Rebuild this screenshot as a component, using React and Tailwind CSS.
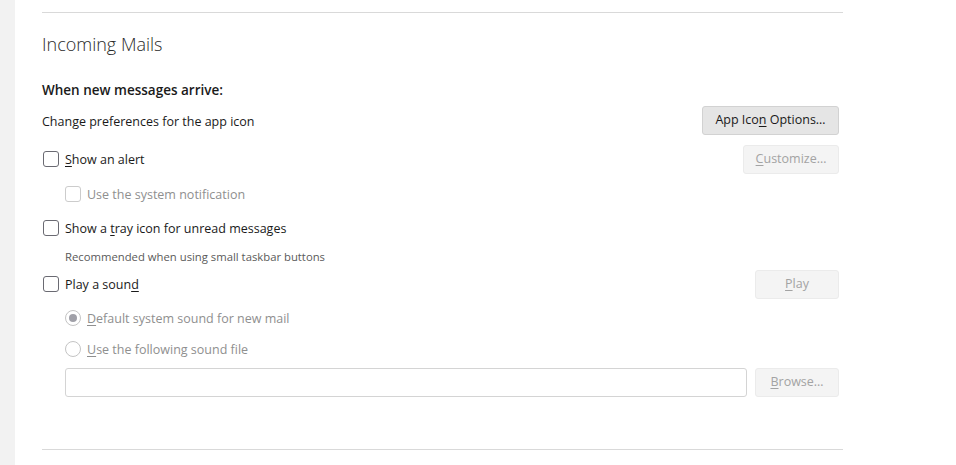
import React from 'react';

const font = { fontFamily: '"Open Sans", "Noto Sans", sans-serif' };

function Key({ children }) {
  return <span className="underline underline-offset-2">{children}</span>;
}

function Checkbox({ disabled }) {
  return (
    <span
      className={`inline-block w-4 h-4 rounded-[3px] border bg-white shrink-0 ${
        disabled ? 'border-[#cccccc]' : 'border-[#6a6a72]'
      }`}
    />
  );
}

function Radio({ checked }) {
  return (
    <span className="flex items-center justify-center w-4 h-4 rounded-full border border-[#c4c4c4] bg-white shrink-0">
      {checked && <span className="w-2 h-2 rounded-full bg-[#a0a0a8]" />}
    </span>
  );
}

function Button({ children, disabled, className = '' }) {
  return (
    <button
      className={`h-[29px] rounded-[3px] border text-[12.5px] ${
        disabled
          ? 'bg-[#f4f4f4] border-[#ebebeb] text-[#a3a3a3]'
          : 'bg-[#e5e5e5] border-[#d2d2d2] text-[#1a1a1a]'
      } ${className}`}
    >
      {children}
    </button>
  );
}

export default function App() {
  return (
    <div className="flex w-[956px] h-[465px] bg-white overflow-hidden text-[#1a1a1a] text-[12.5px]" style={font}>
      <div className="w-[15px] bg-[#f2f2f2] shrink-0" />
      <div className="pl-[27px]">
        <div className="w-[801px]">
          <div className="mt-3 h-px bg-[#d9d9d9]" />
          <div className="h-[62px] flex items-center text-[18px] font-light text-[#2a2a2a]">Incoming Mails</div>
          <div className="h-7 flex items-center pt-[2px] text-[13.5px] font-semibold">When new messages arrive:</div>

          <div className="pr-[4px]">
            <div className="mt-[3px] h-[29px] flex items-center justify-between">
              <span className="pt-[3px]">Change preferences for the app icon</span>
              <Button className="w-[137px]">
                App Ico<Key>n</Key> Options…
              </Button>
            </div>

            <div className="mt-[10px] h-7 flex items-center justify-between">
              <label className="flex items-center gap-[6px] pl-px">
                <Checkbox />
                <span className="pt-[2px]">
                  <Key>S</Key>how an alert
                </span>
              </label>
              <Button disabled className="w-[96px] h-[28px]">
                <Key>C</Key>ustomize…
              </Button>
            </div>

            <div className="mt-[7px] h-7 flex items-center pl-[23px] gap-[6px] text-[#8f8f8f]">
              <Checkbox disabled />
              <span className="pt-[2px]">Use the system notification</span>
            </div>

            <div className="mt-[6px] h-7 flex items-center gap-[6px] pl-px">
              <Checkbox />
              <span className="pt-[2px]">
                Show a <Key>t</Key>ray icon for unread messages
              </span>
            </div>

            <div className="h-7 flex items-center pt-[2px] pl-[23px] text-[11.3px] text-[#5a5a5a]">
              Recommended when using small taskbar buttons
            </div>

            <div className="h-7 flex items-center justify-between">
              <label className="flex items-center gap-[6px] pl-px">
                <Checkbox />
                <span className="pt-[2px]">
                  Play a soun<Key>d</Key>
                </span>
              </label>
              <Button disabled className="w-[84px]">
                <Key>P</Key>lay
              </Button>
            </div>

            <div className="mt-[6px] h-7 flex items-center pl-[23px] gap-[6px] text-[#8f8f8f]">
              <Radio checked />
              <span className="pt-[2px]">
                <Key>D</Key>efault system sound for new mail
              </span>
            </div>

            <div className="mt-[3px] h-7 flex items-center pl-[23px] gap-[6px] text-[#8f8f8f]">
              <Radio />
              <span className="pt-[2px]">
                <Key>U</Key>se the following sound file
              </span>
            </div>

            <div className="mt-[5px] flex items-center pl-[23px] gap-[8px]">
              <div className="flex-1 h-[29px] rounded-[3px] border border-[#d4d4d4] bg-white" />
              <Button disabled className="w-[84px]">
                <Key>B</Key>rowse…
              </Button>
            </div>
          </div>

          <div className="mt-[52px] h-px bg-[#d9d9d9]" />
        </div>
      </div>
    </div>
  );
}
